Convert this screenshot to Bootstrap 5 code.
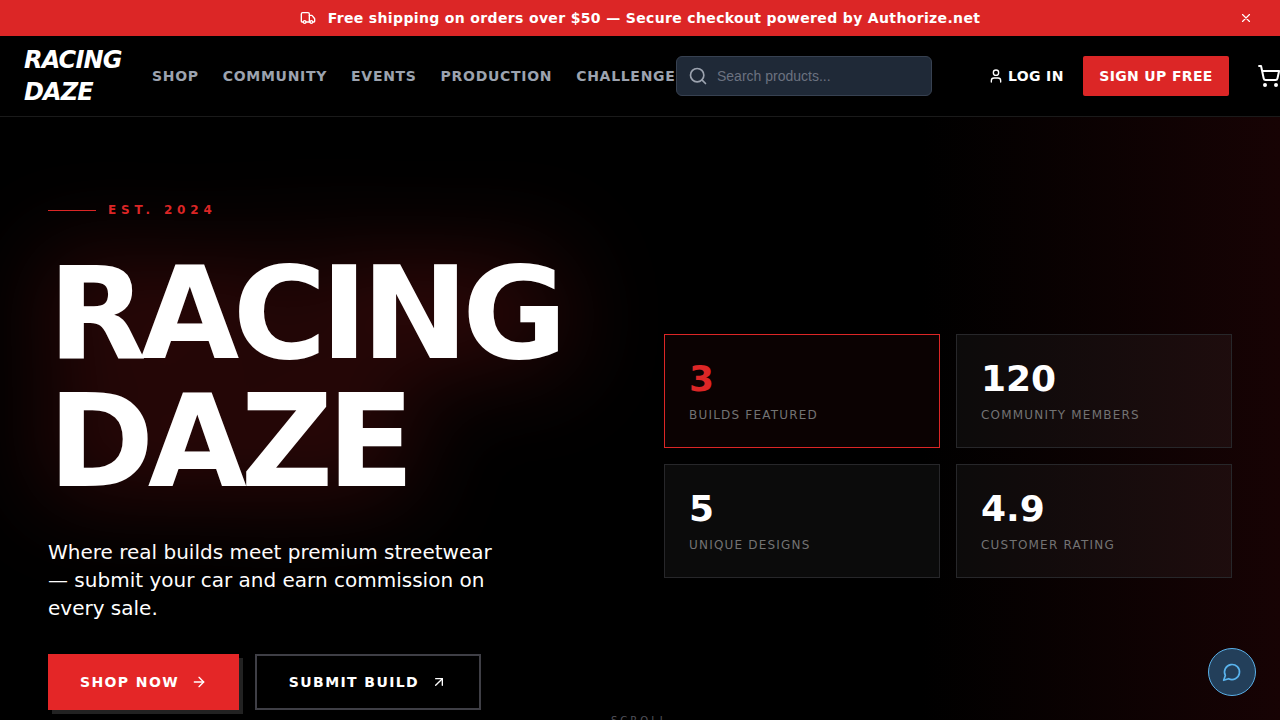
<!DOCTYPE html>
<html lang="en">
<head>
    <meta charset="UTF-8">
    <meta name="viewport" content="width=device-width, initial-scale=1.0">
    <link href="https://cdn.jsdelivr.net/npm/bootstrap@5.3.0/dist/css/bootstrap.min.css" rel="stylesheet">
    <title>Racing Daze</title>
    <style>
        html, body { height: 100%; overflow: hidden; }
        body { background: #000; color: #fff; font-family: "DejaVu Sans", sans-serif; }
        svg { display: block; flex-shrink: 0; }

        .promo-bar { height: 36px; background: #dc2626; font-size: 14px; font-weight: 700; letter-spacing: .35px; gap: 12px; }
        .promo-close { right: 27px; top: 11px; width: 14px; height: 14px; padding: 0; border: 0; background: none; color: #fff; }

        .site-nav { height: 81px; padding: 0 24px; background: #000; border-bottom: 1px solid #1a1a1a; width: 1320px; }
        .logo-text { width: 104px; font-size: 24px; line-height: 32px; font-weight: 700; font-style: italic; letter-spacing: -.85px; color: #fff; text-decoration: none; }
        .nav-items { margin-left: 24px; gap: 24px; width: 524px; flex-shrink: 0; }
        .nav-items a { font-size: 14px; font-weight: 700; letter-spacing: .7px; color: #9ca3af; text-decoration: none; white-space: nowrap; }
        .search-box { width: 256px; height: 40px; background: #1f2937; border: 1px solid #374151; border-radius: 6px; padding: 0 11px; gap: 9px; }
        .search-box input { background: none; border: 0; outline: 0; padding: 0; width: 100%; font: 14px "Liberation Sans", sans-serif; color: #fff; }
        .search-box input::placeholder { color: #6b7280; opacity: 1; }
        .login-link { margin-left: 56px; font-size: 14px; font-weight: 700; letter-spacing: .35px; color: #fff; text-decoration: none; gap: 4px; width: 76px; white-space: nowrap; }
        .signup-btn { margin-left: 19px; width: 146px; height: 40px; background: #dc2626; border-radius: 2px; font-size: 14px; font-weight: 700; letter-spacing: .35px; color: #fff; text-decoration: none; }
        .cart-link { margin-left: 28px; color: #fff; }

        .hero { height: 678px; padding: 0 48px; background: linear-gradient(90deg, #000 72%, #170304 100%); display: grid; grid-template-columns: 568px 568px; column-gap: 48px; }
        .est-row { height: 16px; }
        .est-line { width: 48px; height: 1px; background: #dc2626; }
        .est-text { font-size: 12px; line-height: 16px; font-weight: 700; letter-spacing: 4.8px; color: #dc2626; }
        .hero-title { margin: 32px 0; font-size: 128px; line-height: 128px; font-weight: 700; letter-spacing: -6.4px; color: #fff; filter: drop-shadow(0 0 50px rgba(220, 38, 38, .42)); }
        .hero-sub { width: 460px; margin: 0 0 32px; font-size: 20px; line-height: 28px; color: #fff; }
        .cta-main, .cta-alt { height: 56px; font-size: 14px; font-weight: 700; letter-spacing: 1.4px; color: #fff; text-decoration: none; gap: 12px; }
        .cta-main { width: 191px; background: #e42627; box-shadow: 4px 4px 0 #222; }
        .cta-alt { width: 226px; border: 2px solid #3f3f46; }
        .scroll-label { left: 611px; top: 596px; font-size: 10px; letter-spacing: 3px; color: #52525b; }

        .stat-grid { display: grid; grid-template-columns: 276px 276px; grid-auto-rows: 114px; gap: 16px; }
        .stat-box { padding: 24px; background: rgba(255, 255, 255, .045); border: 1px solid #27272a; }
        .stat-box.is-hot { background: rgba(220, 38, 38, .05); border-color: #dc2626; }
        .stat-num { font-size: 36px; line-height: 40px; font-weight: 700; color: #fff; }
        .is-hot .stat-num { color: #dc2626; }
        .stat-label { margin-top: 8px; font-size: 12px; line-height: 16px; letter-spacing: 1.2px; color: #737373; }

        .chat-btn { right: 24px; bottom: 24px; width: 48px; height: 48px; border-radius: 50%; background: #233f5a; border: 1px solid #5ab0e8; color: #5ab4ee; }
    </style>
</head>
<body>

    <div class="promo-bar position-relative d-flex align-items-center justify-content-center">
        <svg width="16" height="16" viewBox="0 0 24 24" fill="none" stroke="currentColor" stroke-width="2" stroke-linecap="round" stroke-linejoin="round"><path d="M14 18V6a2 2 0 0 0-2-2H4a2 2 0 0 0-2 2v11a1 1 0 0 0 1 1h2"/><path d="M15 18H9"/><path d="M19 18h2a1 1 0 0 0 1-1v-3.65a1 1 0 0 0-.22-.624l-3.48-4.35A1 1 0 0 0 17.52 8H14"/><circle cx="17" cy="18" r="2"/><circle cx="7" cy="18" r="2"/></svg>
        <span>Free shipping on orders over $50 — Secure checkout powered by Authorize.net</span>
        <button class="promo-close position-absolute" aria-label="Close">
            <svg width="14" height="14" viewBox="0 0 24 24" fill="none" stroke="currentColor" stroke-width="2" stroke-linecap="round"><path d="M18 6 6 18M6 6l12 12"/></svg>
        </button>
    </div>

    <nav class="site-nav d-flex align-items-center">
        <a class="logo-text flex-shrink-0" href="#">RACING DAZE</a>
        <div class="nav-items d-flex">
            <a href="#">SHOP</a>
            <a href="#">COMMUNITY</a>
            <a href="#">EVENTS</a>
            <a href="#">PRODUCTION</a>
            <a href="#">CHALLENGE</a>
        </div>
        <div class="search-box d-flex align-items-center flex-shrink-0">
            <svg width="20" height="20" viewBox="0 0 24 24" fill="none" stroke="#9ca3af" stroke-width="2" stroke-linecap="round" stroke-linejoin="round"><circle cx="11" cy="11" r="8"/><path d="m21 21-4.3-4.3"/></svg>
            <input type="text" placeholder="Search products...">
        </div>
        <a class="login-link d-flex align-items-center flex-shrink-0" href="#">
            <svg width="16" height="16" viewBox="0 0 24 24" fill="none" stroke="currentColor" stroke-width="2" stroke-linecap="round" stroke-linejoin="round"><path d="M19 21v-2a4 4 0 0 0-4-4H9a4 4 0 0 0-4 4v2"/><circle cx="12" cy="7" r="4"/></svg>
            LOG IN
        </a>
        <a class="signup-btn d-flex align-items-center justify-content-center flex-shrink-0" href="#">SIGN UP FREE</a>
        <a class="cart-link flex-shrink-0" href="#">
            <svg width="24" height="24" viewBox="0 0 24 24" fill="none" stroke="currentColor" stroke-width="2" stroke-linecap="round" stroke-linejoin="round"><circle cx="8" cy="21" r="1"/><circle cx="19" cy="21" r="1"/><path d="M2.05 2.05h2l2.66 12.42a2 2 0 0 0 2 1.58h9.78a2 2 0 0 0 1.95-1.57l1.65-7.43H5.12"/></svg>
        </a>
    </nav>

    <section class="hero position-relative align-items-center">
        <div>
            <div class="est-row d-flex align-items-center gap-2">
                <span class="est-line me-1"></span>
                <span class="est-text">EST. 2024</span>
            </div>
            <h1 class="hero-title">RACING<br>DAZE</h1>
            <p class="hero-sub">Where real builds meet premium streetwear — submit your car and earn commission on every sale.</p>
            <div class="d-flex gap-3">
                <a class="cta-main d-flex align-items-center justify-content-center" href="#">SHOP NOW
                    <svg width="16" height="16" viewBox="0 0 24 24" fill="none" stroke="currentColor" stroke-width="2" stroke-linecap="round" stroke-linejoin="round"><path d="M5 12h14"/><path d="m12 5 7 7-7 7"/></svg>
                </a>
                <a class="cta-alt d-flex align-items-center justify-content-center" href="#">SUBMIT BUILD
                    <svg width="16" height="16" viewBox="0 0 24 24" fill="none" stroke="currentColor" stroke-width="2" stroke-linecap="round" stroke-linejoin="round"><path d="M7 7h10v10"/><path d="M7 17 17 7"/></svg>
                </a>
            </div>
        </div>
        <div class="stat-grid">
            <div class="stat-box is-hot">
                <div class="stat-num">3</div>
                <div class="stat-label">BUILDS FEATURED</div>
            </div>
            <div class="stat-box">
                <div class="stat-num">120</div>
                <div class="stat-label">COMMUNITY MEMBERS</div>
            </div>
            <div class="stat-box">
                <div class="stat-num">5</div>
                <div class="stat-label">UNIQUE DESIGNS</div>
            </div>
            <div class="stat-box">
                <div class="stat-num">4.9</div>
                <div class="stat-label">CUSTOMER RATING</div>
            </div>
        </div>
        <span class="scroll-label position-absolute">SCROLL</span>
    </section>

    <a class="chat-btn position-fixed d-flex align-items-center justify-content-center" href="#">
        <svg width="20" height="20" viewBox="0 0 24 24" fill="none" stroke="currentColor" stroke-width="2" stroke-linecap="round" stroke-linejoin="round"><path d="M7.9 20A9 9 0 1 0 4 16.1L2 22Z"/></svg>
    </a>

<script src="https://cdn.jsdelivr.net/npm/bootstrap@5.3.0/dist/js/bootstrap.bundle.min.js"></script>
</body>
</html>
